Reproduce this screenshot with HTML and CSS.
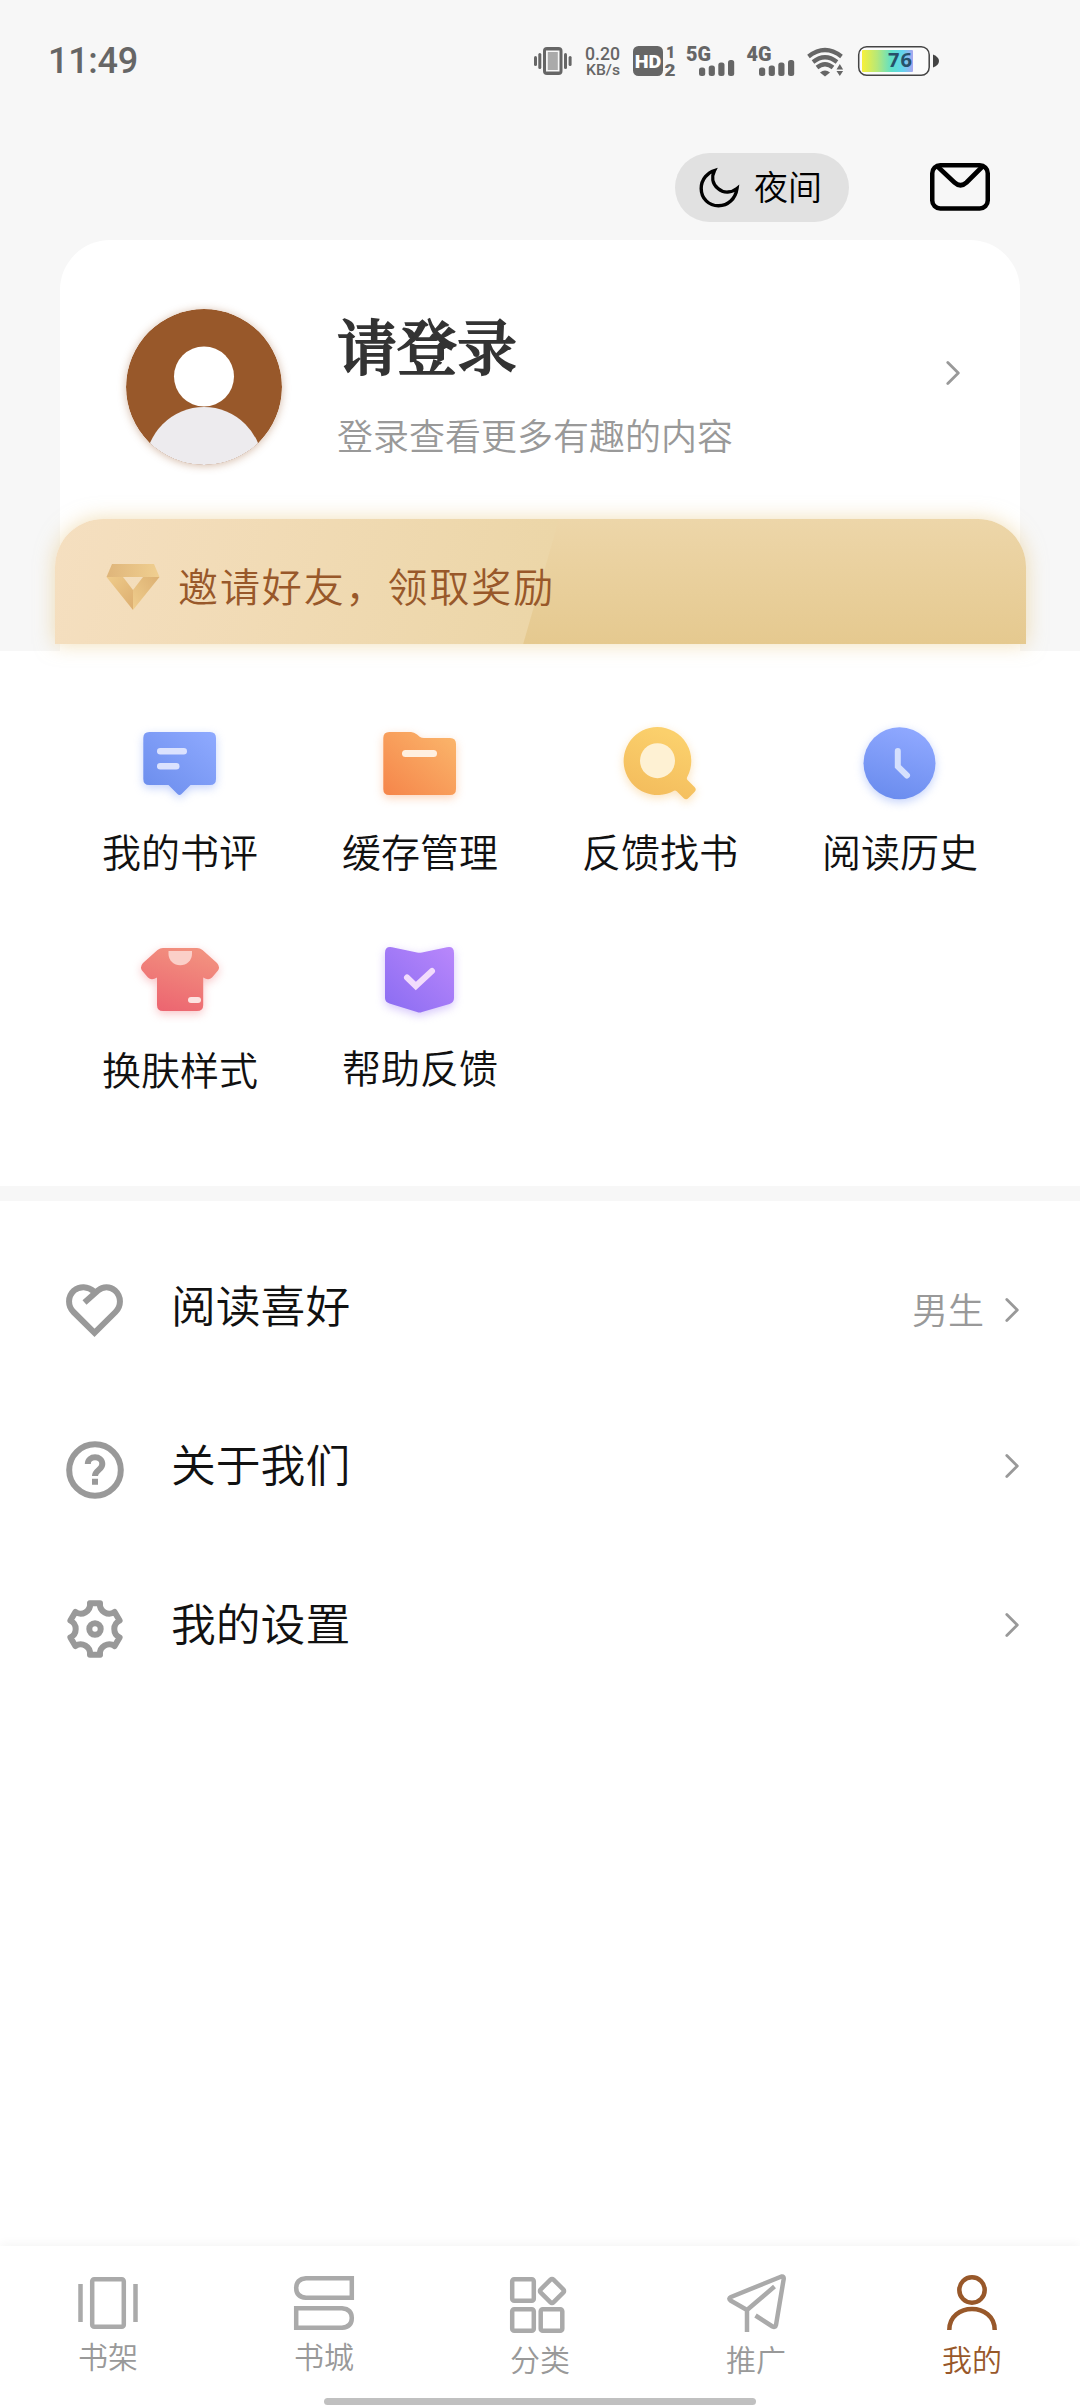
FILE: index.html
```html
<!DOCTYPE html>
<html lang="zh-CN">
<head>
<meta charset="utf-8">
<title>我的</title>
<link rel="stylesheet" href="styles.css">
</head>
<body>
<div class="app">
  <section class="hero">
    <div class="status">
      <span class="clock">11:49</span>
      <svg class="indicators" width="420" height="40" viewBox="526 40 420 40">
        <g fill="#666">
          <rect x="534" y="56" width="3" height="10" rx="1.5"/><rect x="538.3" y="53" width="3" height="16" rx="1.5"/>
          <rect x="564" y="53" width="3" height="16" rx="1.5"/><rect x="568.6" y="56" width="3" height="10" rx="1.5"/>
          <rect x="543" y="47" width="19.5" height="28" rx="4"/>
          <rect x="546" y="50.5" width="13.5" height="21" fill="#f7f7f7"/>
          <rect x="547.8" y="52" width="10" height="18" fill="#aaa"/>
          <text class="net" x="585" y="60.3" font-size="18" textLength="35" lengthAdjust="spacingAndGlyphs">0.20</text>
          <text class="net" x="586" y="75.3" font-size="15" textLength="34" lengthAdjust="spacingAndGlyphs">KB/s</text>
          <rect x="633" y="46" width="30" height="30" rx="5.5"/>
          <text class="bold" x="634.8" y="68" font-size="19" fill="#fff" textLength="26.5" lengthAdjust="spacingAndGlyphs">HD</text>
          <text class="bold" x="666" y="58" font-size="16">1</text>
          <text class="bold" x="664.5" y="75.5" font-size="16" textLength="11" lengthAdjust="spacingAndGlyphs">2</text>
          <text class="bold" x="686" y="60.5" font-size="19.5" textLength="25" lengthAdjust="spacingAndGlyphs">5G</text>
          <rect x="699" y="67.5" width="6.2" height="8.5" rx="2.5"/><rect x="708.7" y="65.5" width="6.2" height="10.5" rx="2.5"/>
          <rect x="718.3" y="62.5" width="6.2" height="13.5" rx="2.5"/><rect x="728" y="60" width="6.2" height="16" rx="2.5"/>
          <text class="bold" x="746.5" y="60.5" font-size="19.5" textLength="25" lengthAdjust="spacingAndGlyphs">4G</text>
          <rect x="759" y="67.5" width="6.2" height="8.5" rx="2.5"/><rect x="768.7" y="65.5" width="6.2" height="10.5" rx="2.5"/>
          <rect x="778.3" y="62.5" width="6.2" height="13.5" rx="2.5"/><rect x="788" y="60" width="6.2" height="16" rx="2.5"/>
          <path d="M820 72.5Q825 68.5 830 72.5L825 76.5Z"/>
          <path d="M836.5 69.5l3.3-5.5l3.3 5.5zM836.5 71l3.3 5l3.3-5z"/>
        </g>
        <g fill="none" stroke="#666" stroke-width="4.2">
          <path d="M808.5 56.5Q825 43.5 841.5 56.5"/>
          <path d="M813 62Q825 52.5 837 62"/>
          <path d="M817 67.5Q825 61 833 67.5"/>
        </g>
        <defs><linearGradient id="batt"><stop offset="0" stop-color="#f7f03a"/><stop offset=".3" stop-color="#b5e87a"/><stop offset=".58" stop-color="#5fe0c8"/><stop offset=".8" stop-color="#63d3ee"/><stop offset="1" stop-color="#a9a6ef"/></linearGradient></defs>
        <rect x="858.7" y="46.7" width="70.5" height="28.6" rx="8" fill="#fbfbfb" stroke="#444" stroke-width="1.5"/>
        <rect x="862" y="50" width="51" height="22" rx="1" fill="url(#batt)"/>
        <path d="M933 54.5Q939 57 939 61T933 67.5Z" fill="#444"/>
        <text class="level" x="888" y="66.5" font-size="20" fill="#27506a" textLength="24">76</text>
      </svg>
    </div>

    <div class="tools">
      <button class="night">
        <svg width="42" height="42" viewBox="0 0 42 42"><path d="M16.5 3.5C10 5.5 3.2 12 3.2 21.5C3.2 31.5 10.8 38.8 20.5 38.8C30 38.8 37.5 32 39 21.5C34 25.5 26 27 20 21.5C14 16.5 13.5 9.5 16.5 3.5Z" fill="none" stroke="#000" stroke-width="3.4"/></svg>
        <span>夜间</span>
      </button>
      <svg class="mail" width="60" height="48" viewBox="0 0 60 48" fill="none" stroke="#000"><rect x="2.25" y="2.25" width="55.5" height="43.2" rx="8" stroke-width="4.5"/><path d="M7.5 3.5L24.5 19.5Q30.5 25 36.5 19.5L52.5 3.5" stroke-width="4.6"/></svg>
    </div>

    <div class="card">
      <div class="profile">
        <svg class="avatar" width="156" height="156" viewBox="0 0 156 156">
          <defs><clipPath id="round"><circle cx="78" cy="78" r="78"/></clipPath></defs>
          <g clip-path="url(#round)"><rect width="156" height="156" fill="#98582a"/><circle cx="78" cy="156.5" r="58.5" fill="#edebee"/><circle cx="78" cy="67.5" r="30" fill="#fff"/></g>
        </svg>
        <div class="who">
          <h1>请登录</h1>
          <p>登录查看更多有趣的内容</p>
        </div>
        <svg class="chevron" width="14" height="24" viewBox="0 0 14 24"><path d="M1.8 1.5L12.3 12L1.8 22.5"/></svg>
      </div>
      <div class="invite">
        <svg width="54" height="48" viewBox="0 0 54 48">
          <defs><linearGradient id="d1"><stop offset="0" stop-color="#dfb57a"/><stop offset="1" stop-color="#f0cf90"/></linearGradient><linearGradient id="d2" x2="1" y2="1"><stop offset="0" stop-color="#efcb8a"/><stop offset="1" stop-color="#dcae70"/></linearGradient><linearGradient id="d3" x1="1" y1="0" x2="0" y2="1"><stop offset="0" stop-color="#dcb072"/><stop offset="1" stop-color="#f0ce8e"/></linearGradient></defs>
          <path d="M6 1H48L53.5 14H.5Z" fill="url(#d1)"/><path d="M.5 14H17L27 27V47Z" fill="url(#d2)"/><path d="M53.5 14H37L27 27V47Z" fill="url(#d3)"/>
        </svg>
        <span>邀请好友，领取奖励</span>
      </div>
    </div>
  </section>

  <section class="grid">
    <a class="tile">
      <svg class="s-blue" width="100" height="84" viewBox="130 722 100 84">
        <defs><linearGradient id="blue" x1="0" y1="1" x2="1" y2="0"><stop offset="0" stop-color="#6a8cec"/><stop offset="1" stop-color="#8faaff"/></linearGradient></defs>
        <path d="M149.3 732H210Q216 732 216 738V779Q216 785 210 785H190.5L181.5 794Q179.5 796 177.5 794L168.5 785H149.3Q143.3 785 143.3 779V738Q143.3 732 149.3 732Z" fill="url(#blue)"/>
        <rect x="157" y="748" width="30" height="6.4" rx="3.2" fill="#dbe2fe"/><rect x="157" y="763" width="22.5" height="6.4" rx="3.2" fill="#dbe2fe"/>
      </svg>
      <span>我的书评</span>
    </a>
    <a class="tile">
      <svg class="s-orange" width="100" height="84" viewBox="370 722 100 84">
        <defs><linearGradient id="orange" x1="0" y1="1" x2="1" y2="0"><stop offset="0" stop-color="#f5854a"/><stop offset="1" stop-color="#fbb76c"/></linearGradient></defs>
        <path d="M389.3 732H411Q414 732 417 734.5L420 737Q421.5 738 424 738H450Q456 738 456 744V789Q456 795 450 795H389.3Q383.3 795 383.3 789V738Q383.3 732 389.3 732Z" fill="url(#orange)"/>
        <rect x="402" y="750" width="35" height="7" rx="3.5" fill="#fff0e0"/>
      </svg>
      <span>缓存管理</span>
    </a>
    <a class="tile">
      <svg class="s-yellow" width="100" height="84" viewBox="610 722 100 84">
        <defs><linearGradient id="yellow" x1="0" y1="1" x2=".4" y2="0"><stop offset="0" stop-color="#f2b95a"/><stop offset="1" stop-color="#fbd06c"/></linearGradient></defs>
        <path d="M657.3 727A34 34 0 0 1 687 777.5Q686.5 779 687.5 780L694.5 787Q697 789.5 694.5 792L688.5 798Q686.2 800.5 683.5 798L677 791.5Q675.5 790.2 674 790.8A34 34 0 1 1 657.3 727Z" fill="url(#yellow)"/>
        <circle cx="657.5" cy="760.7" r="17.5" fill="#fef1d3"/>
      </svg>
      <span>反馈找书</span>
    </a>
    <a class="tile">
      <svg class="s-blue" width="100" height="84" viewBox="850 722 100 84">
        <defs><linearGradient id="clock" x1=".3" y1="1" x2=".6" y2="0"><stop offset="0" stop-color="#6a8cee"/><stop offset="1" stop-color="#8fa8ff"/></linearGradient></defs>
        <circle cx="899.5" cy="763.3" r="36" fill="url(#clock)"/>
        <path d="M897.8 751V766.5L907 775.5" fill="none" stroke="#d5e0fd" stroke-width="6" stroke-linecap="round"/>
      </svg>
      <span>阅读历史</span>
    </a>
    <a class="tile low">
      <svg class="s-red" width="100" height="84" viewBox="130 938 100 84">
        <defs><linearGradient id="red" x1=".2" y1="1" x2=".6" y2="0"><stop offset="0" stop-color="#ec6470"/><stop offset="1" stop-color="#f2917f"/></linearGradient></defs>
        <path d="M163 948H197Q200 948 202.5 950L217 963Q220.5 967 218 970.5L212 977.5Q208.5 981 203.2 977.5V1005Q203.2 1011 197 1011H163Q157 1011 157 1005V977.5Q151.5 981 148 977.5L142 970.5Q139.5 967 143 963L157.5 950Q160 948 163 948Z" fill="url(#red)"/>
        <path d="M168.5 951H192V954A11.7 11.3 0 0 1 168.5 954Z" fill="#fbcfc8"/>
        <rect x="188" y="997" width="13" height="6" rx="3" fill="#fde3e1"/>
      </svg>
      <span>换肤样式</span>
    </a>
    <a class="tile">
      <svg class="s-purple" width="100" height="84" viewBox="370 938 100 84">
        <defs><linearGradient id="purple" x1="0" y1="1" x2="1" y2="0"><stop offset="0" stop-color="#8a6cf2"/><stop offset="1" stop-color="#b987fb"/></linearGradient></defs>
        <path d="M392 947.2L417 952.4Q419.5 952.9 422 952.4L447 947.3Q454 946 454 953V998Q454 1002.5 449.5 1004L422 1012Q419.5 1013 417 1012L389.5 1003.5Q385 1002 385 998V953Q385 946 392 947.2Z" fill="url(#purple)"/>
        <path d="M407 977.5L415.8 986L432 971" fill="none" stroke="#f2dcfc" stroke-width="6" stroke-linecap="round"/>
      </svg>
      <span>帮助反馈</span>
    </a>
  </section>

  <section class="list">
    <a class="item first">
      <svg class="lead" width="58" height="58" viewBox="0 -2 58 58"><path d="M18.5 18.5L32 6.5C37 2 44 2 49 6.5C55.5 12.5 55.5 22 49.5 28L28.5 48.8L7.5 28C1.5 22 1.5 12.5 8 6.5C13.5 2 22 2 28 7.5"/></svg>
      <span class="name">阅读喜好</span>
      <span class="value">男生</span>
      <svg class="chevron" width="14" height="24" viewBox="0 0 14 24"><path d="M1.8 1.5L12.3 12L1.8 22.5"/></svg>
    </a>
    <a class="item">
      <svg class="lead" width="58" height="58" viewBox="-29 -29 58 58"><circle r="25.8"/><path d="M-7.2 -6C-7.2 -15 7.3 -15 7.3 -6C7.3 0 0 0 0 6M0 8.7V14.7"/></svg>
      <span class="name">关于我们</span>
      <svg class="chevron" width="14" height="24" viewBox="0 0 14 24"><path d="M1.8 1.5L12.3 12L1.8 22.5"/></svg>
    </a>
    <a class="item">
      <svg class="lead" width="58" height="58" viewBox="-29 -29 58 58"><path d="M-5 -25.7H5A9.3 9.3 0 0 0 19.6 -17.1L24.6 -8.4A9.3 9.3 0 0 0 24.6 8.4L19.6 17.1A9.3 9.3 0 0 0 5 25.7H-5A9.3 9.3 0 0 0 -19.6 17.1L-24.6 8.4A9.3 9.3 0 0 0 -24.6 -8.4L-19.6 -17.1A9.3 9.3 0 0 0 -5 -25.7Z" stroke-linejoin="round"/><circle r="5.7"/></svg>
      <span class="name">我的设置</span>
      <svg class="chevron" width="14" height="24" viewBox="0 0 14 24"><path d="M1.8 1.5L12.3 12L1.8 22.5"/></svg>
    </a>
  </section>

  <nav class="tabs">
    <a class="tab">
      <svg width="64" height="64" viewBox="76 2272 64 64"><rect x="92.2" y="2279.2" width="31.6" height="47.5" rx="2"/><path d="M80.5 2284V2322M135.5 2284V2322"/></svg>
      <span>书架</span>
    </a>
    <a class="tab">
      <svg width="64" height="64" viewBox="292 2272 64 64"><path d="M351.8 2278.2H306Q296.2 2279 296.2 2288T306 2297.8H351.8ZM296.2 2308.2H342Q351.8 2309 351.8 2318T342 2327.8H296.2Z"/></svg>
      <span>书城</span>
    </a>
    <a class="tab drop">
      <svg width="64" height="64" viewBox="508 2272 64 64"><rect x="512.2" y="2279.2" width="21.6" height="21.6" rx="2"/><rect x="512.2" y="2309.2" width="21.6" height="21.6" rx="2"/><rect x="540.7" y="2309.2" width="21.6" height="21.6" rx="2"/><rect x="542.9" y="2281.9" width="18.2" height="18.2" rx="2" transform="rotate(45 552 2291)"/></svg>
      <span>分类</span>
    </a>
    <a class="tab drop">
      <svg width="64" height="64" viewBox="724 2272 64 64"><path stroke-linejoin="round" d="M747 2332V2310L774.5 2286.5M747 2310L730.5 2300.5Q728 2298.5 731 2297L781.5 2276.5Q784 2276 783.7 2279L776 2325Q775.3 2327.8 772.5 2326.5L755.5 2315.5"/></svg>
      <span>推广</span>
    </a>
    <a class="tab drop active">
      <svg width="64" height="64" viewBox="940 2272 64 64"><circle cx="972" cy="2290" r="12.7"/><path d="M949.3 2330C949.3 2302 994.7 2302 994.7 2330"/></svg>
      <span>我的</span>
    </a>
  </nav>
  <div class="home"></div>
</div>
</body>
</html>
```
FILE: styles.css
```css
* { box-sizing: border-box; margin: 0; padding: 0; }
body { background: #fff; font-family: "Noto Sans CJK SC", sans-serif; font-weight: 350; color: #111; }
svg { display: block; flex: none; }
.app { width: 1080px; height: 2408px; display: flex; flex-direction: column; overflow: hidden; position: relative; }

/* Top area */
.hero { height: 651px; background: #f7f7f7; display: flex; flex-direction: column; flex: none; }
.status { height: 120px; padding: 40px 134px 0 48px; display: flex; justify-content: space-between; align-items: flex-start; flex: none; }
.clock { font: 500 36px/42px Roboto, sans-serif; color: #666; letter-spacing: -.3px; }
.net { font-family: Roboto, sans-serif; font-weight: 500; }
.bold { font-family: Roboto, sans-serif; font-weight: 900; }
.level { font-family: "Noto Sans", sans-serif; font-weight: 700; }
.tools { height: 120px; padding: 33px 90px 0 0; display: flex; justify-content: flex-end; align-items: flex-start; gap: 81px; flex: none; }
.night { width: 174px; height: 69px; border: 0; border-radius: 35px; background: #e1e1e1; display: flex; align-items: center; gap: 14px; padding: 0 0 0 23px; font: inherit; font-size: 34px; line-height: 65px; color: #000; white-space: nowrap; }
.night span { height: 69px; }
.mail { margin-top: 10px; }

.card { width: 960px; height: 411px; margin: 0 60px; background: #fff; border-radius: 50px 50px 0 0; flex: none; }
.profile { height: 279px; padding: 69px 60px 0 66px; display: flex; align-items: flex-start; }
.avatar { border-radius: 50%; box-shadow: 0 1px 8px rgba(152, 88, 42, .4); }
.who { margin-left: 55px; flex: 1; }
h1 { font: 500 60px/80px "Noto Serif CJK SC", "Noto Sans CJK SC", serif; -webkit-text-stroke: 1.8px #333; color: #333; margin-top: -5px; }
.who p { font-size: 36px; line-height: 50px; color: #999; margin-top: 25px; }
.chevron path { fill: none; stroke: #999; stroke-width: 2.8; stroke-linecap: round; stroke-linejoin: round; }
.profile .chevron { margin-top: 52px; }
.invite { width: 971px; height: 125px; margin-left: -5px; padding: 0 0 0 51px; display: flex; align-items: center; gap: 18px; border-radius: 48px 48px 0 0; font-size: 40px; letter-spacing: 1.9px; color: #98582a; position: relative;
  background: linear-gradient(106deg, rgba(245, 223, 192, 1) 0, #ecd6a8 484px, transparent 485px), linear-gradient(to bottom, #edd6a9, #e5c98f);
  box-shadow: 0 0 20px rgba(229, 194, 120, .55); }
.invite svg { margin-top: 10px; }
.invite span { margin-top: 7px; }

/* Shortcuts */
.grid { height: 535px; padding: 71px 60px 0; display: grid; grid-template-columns: repeat(4, 240px); grid-auto-rows: 216px; flex: none; }
.tile { display: flex; flex-direction: column; align-items: center; gap: 15px; font-size: 39px; line-height: 58px; }
.low { gap: 17px; }
.s-blue { filter: drop-shadow(0 3px 5px rgba(110, 145, 245, .4)); }
.s-orange { filter: drop-shadow(0 3px 5px rgba(248, 150, 85, .4)); }
.s-yellow { filter: drop-shadow(0 3px 5px rgba(245, 185, 90, .4)); }
.s-red { filter: drop-shadow(0 3px 5px rgba(240, 110, 115, .4)); }
.s-purple { filter: drop-shadow(0 3px 5px rgba(150, 110, 245, .4)); }

/* Settings rows */
.list { border-top: 15px solid #f7f7f7; padding-top: 30px; flex: 1; display: flex; flex-direction: column; }
.item { height: 159px; padding: 0 61px 0 66px; display: flex; align-items: center; }
.lead { fill: none; stroke: #999; stroke-width: 6; }
.name { flex: 1; margin-left: 47px; font-size: 44.8px; line-height: 60px; margin-top: -13px; }
.value { font-size: 36px; color: #999; margin-right: 21px; margin-top: -6px; }
.item .chevron { margin-top: -7px; }
.first .chevron { margin-top: -2px; }

/* Bottom tabs */
.tabs { height: 162px; display: flex; background: #fff; box-shadow: 0 -3px 9px rgba(0, 0, 0, .04); flex: none; }
.tab { flex: 1; padding-top: 26px; display: flex; flex-direction: column; align-items: center; font-size: 30px; line-height: 42px; color: #999; }
.tab svg { fill: none; stroke: #aaa; stroke-width: 4.5; }
.tab span { margin-top: -2px; }
.drop span { margin-top: 1px; }
.active { color: #98582a; }
.tab.active svg { stroke: #98582a; }
.home { position: absolute; left: 324px; bottom: 3px; width: 432px; height: 7px; border-radius: 4px; background: #c0c0c0; }
```
